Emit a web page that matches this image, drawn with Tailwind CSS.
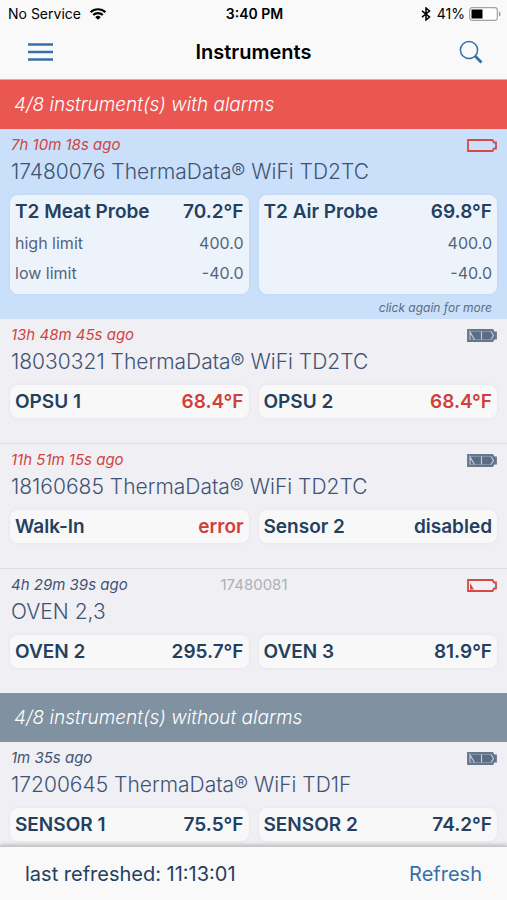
<!DOCTYPE html>
<html lang="en">
<head>
    <meta charset="UTF-8">
    <meta name="viewport" content="width=device-width, initial-scale=1.0">
    <title>Instruments</title>
    <script src="https://cdn.jsdelivr.net/npm/@tailwindcss/browser@4"></script>
</head>
<body class="h-screen flex flex-col bg-[#efeff4] text-[#24405f] font-['Inter','Liberation_Sans',sans-serif]">
    <!-- Battery icons -->
    <svg class="hidden">
        <symbol id="battery-empty" viewBox="0 0 30 13">
            <path d="M1 1h24.500l1.500 2.500h2v6H27L25.500 12H1z" fill="none" stroke="currentColor" stroke-width="1.800"/>
        </symbol>
        <symbol id="battery-low" viewBox="0 0 30 13">
            <path d="M1 1h24.500l1.500 2.500h2v6H27L25.500 12H1z" fill="none" stroke="currentColor" stroke-width="1.800"/>
            <path d="M3 4l4 6.500H3z" fill="currentColor"/>
        </symbol>
        <symbol id="battery-full" viewBox="0 0 30 13">
            <path d="M1 1h24.500l1.500 2.500h2v6H27L25.500 12H1z" fill="#5b6c84" stroke="#66768d" stroke-width="1.800"/>
            <path d="M2.500 2.500h22M2.500 10.500h22" stroke="#8a98aa" stroke-width=".8"/>
            <path d="M3 10.500V3l4.500 7.500M14.500 2.500v8M24 2.500l2.500 4-2.500 4" fill="none" stroke="#c3ccd7" stroke-width="1.200"/>
        </symbol>
    </svg>

    <header class="shrink-0 bg-[#f9f9f9] text-black border-b border-[#c9b5b8]">
        <!-- Status bar -->
        <div class="grid grid-cols-3 items-center h-7 pl-2 pr-1.5 text-sm">
            <div class="flex items-center gap-2">
                <span>No Service</span>
                <svg class="w-[18px] h-3" viewBox="0 0 18 13" fill="none" stroke="black" stroke-width="2.300">
                    <path d="M1 4.600a11.500 11.500 0 0 1 16 0"/>
                    <path d="M3.800 7.600a7.500 7.500 0 0 1 10.400 0"/>
                    <path d="M9 12.800L6 9.900a4.200 4.200 0 0 1 6 0z" fill="black" stroke="none"/>
                </svg>
            </div>
            <div class="text-center font-semibold">3:40 PM</div>
            <div class="flex items-center justify-end">
                <svg class="w-[10px] h-[14px] mr-1.5" viewBox="0 0 10 14" fill="none" stroke="black" stroke-width="1.500">
                    <path d="M1 3.800l7.500 6.200L5 13V1l3.500 3L1 10.200"/>
                </svg>
                <span class="mr-1">41%</span>
                <svg class="w-[32px] h-[14px]" viewBox="0 0 32 14">
                    <rect x=".7" y=".7" width="27.600" height="12.600" rx="2.500" fill="white" stroke="#a3a3a3" stroke-width="1.200"/>
                    <rect x="2.500" y="2.500" width="11" height="9" fill="black"/>
                    <path d="M29.800 4.500q2 .5 2 2.500t-2 2.500z" fill="#a3a3a3"/>
                </svg>
            </div>
        </div>
        <!-- Nav bar -->
        <nav class="grid grid-cols-[1fr_auto_1fr] items-center h-[51px] px-6 pb-1">
            <button type="button" aria-label="Menu" class="justify-self-start pl-1">
                <svg class="w-[25px] h-[18px]" viewBox="0 0 25 18" stroke="#386fa8" stroke-width="2.400">
                    <path d="M0 1.500h25M0 9h25M0 16.500h25"/>
                </svg>
            </button>
            <h1 class="text-xl font-semibold">Instruments</h1>
            <button type="button" aria-label="Search" class="justify-self-end">
                <svg class="w-6 h-6" viewBox="0 0 24 24" fill="none" stroke="#386fa8">
                    <circle cx="10" cy="10" r="8.600" stroke-width="1.500"/>
                    <path d="M16 16l6.500 6.500" stroke-width="2.800"/>
                </svg>
            </button>
        </nav>
    </header>

    <main class="flex-1 min-h-0 overflow-y-auto [scrollbar-width:none]">
        <h2 class="flex items-center h-[49px] px-3.5 pt-0.5 bg-[#ea5753] text-white text-[19px] italic font-light">4/8 instrument(s) with alarms</h2>
        <ul>
            <!-- Selected instrument -->
            <li class="px-2.5 bg-[#c9dffa]">
                <div class="flex items-center justify-between h-[33px] pl-px">
                    <time class="text-[15px] italic text-[#d0453f]">7h 10m 18s ago</time>
                    <svg class="w-[30px] h-[13px] text-[#d64a43]" role="img" aria-label="Battery empty"><use href="#battery-empty"/></svg>
                </div>
                <h3 class="h-[33px] pl-px text-[21px] leading-5 font-light text-[#3f5474]">17480076 ThermaData® WiFi TD2TC</h3>
                <div class="grid grid-cols-2 gap-2.5">
                    <div class="px-[5px] pb-1.5 rounded-lg bg-[#edf3fa] shadow-[0_0_4px_rgba(0,0,0,0.05)]">
                        <div class="flex items-center justify-between h-[33px] pt-0.5 text-[19px] font-semibold"><span>T2 Meat Probe</span><span>70.2°F</span></div>
                        <div class="flex items-center justify-between h-[30px] text-base text-[#53657e]"><span>high limit</span><span>400.0</span></div>
                        <div class="flex items-center justify-between h-[30px] text-base text-[#53657e]"><span>low limit</span><span>-40.0</span></div>
                    </div>
                    <div class="px-[5px] pb-1.5 rounded-lg bg-[#edf3fa] shadow-[0_0_4px_rgba(0,0,0,0.05)]">
                        <div class="flex items-center justify-between h-[33px] pt-0.5 text-[19px] font-semibold"><span>T2 Air Probe</span><span>69.8°F</span></div>
                        <div class="flex items-center justify-end h-[30px] text-base text-[#53657e]">400.0</div>
                        <div class="flex items-center justify-end h-[30px] text-base text-[#53657e]">-40.0</div>
                    </div>
                </div>
                <p class="h-[25px] pt-1.5 pr-[5px] text-right text-xs italic text-[#5d6b7e]">click again for more</p>
            </li>
            <li class="px-2.5 pb-[25px] border-b border-[#dcdce2]">
                <div class="flex items-center justify-between h-[33px] pl-px">
                    <time class="text-[15px] italic text-[#d0453f]">13h 48m 45s ago</time>
                    <svg class="w-[30px] h-[13px]" role="img" aria-label="Battery full"><use href="#battery-full"/></svg>
                </div>
                <h3 class="h-[33px] pl-px text-[21px] leading-5 font-light text-[#3f5474]">18030321 ThermaData® WiFi TD2TC</h3>
                <div class="grid grid-cols-2 gap-2.5 text-[19px] font-semibold">
                    <div class="flex items-center justify-between h-[33px] pt-0.5 px-[5px] rounded-lg bg-[#f8f8f9] shadow-[0_0_4px_rgba(0,0,0,0.05)]"><span>OPSU 1</span><span class="text-[#d0403a]">68.4°F</span></div>
                    <div class="flex items-center justify-between h-[33px] pt-0.5 px-[5px] rounded-lg bg-[#f8f8f9] shadow-[0_0_4px_rgba(0,0,0,0.05)]"><span>OPSU 2</span><span class="text-[#d0403a]">68.4°F</span></div>
                </div>
            </li>
            <li class="px-2.5 pb-[25px] border-b border-[#dcdce2]">
                <div class="flex items-center justify-between h-[33px] pl-px">
                    <time class="text-[15px] italic text-[#d0453f]">11h 51m 15s ago</time>
                    <svg class="w-[30px] h-[13px]" role="img" aria-label="Battery full"><use href="#battery-full"/></svg>
                </div>
                <h3 class="h-[33px] pl-px text-[21px] leading-5 font-light text-[#3f5474]">18160685 ThermaData® WiFi TD2TC</h3>
                <div class="grid grid-cols-2 gap-2.5 text-[19px] font-semibold">
                    <div class="flex items-center justify-between h-[33px] pt-0.5 px-[5px] rounded-lg bg-[#f8f8f9] shadow-[0_0_4px_rgba(0,0,0,0.05)]"><span>Walk-In</span><span class="text-[#d0403a]">error</span></div>
                    <div class="flex items-center justify-between h-[33px] pt-0.5 px-[5px] rounded-lg bg-[#f8f8f9] shadow-[0_0_4px_rgba(0,0,0,0.05)]"><span>Sensor 2</span><span>disabled</span></div>
                </div>
            </li>
            <li class="px-2.5 pb-[25px]">
                <div class="grid grid-cols-3 items-center h-[33px] pl-px text-[15px]">
                    <time class="italic text-[#3f5474]">4h 29m 39s ago</time>
                    <span class="text-center text-[#b0b0b4]">17480081</span>
                    <svg class="justify-self-end w-[30px] h-[13px] text-[#d64a43]" role="img" aria-label="Battery low"><use href="#battery-low"/></svg>
                </div>
                <h3 class="h-[33px] pl-px text-[21px] leading-5 font-light text-[#3f5474]">OVEN 2,3</h3>
                <div class="grid grid-cols-2 gap-2.5 text-[19px] font-semibold">
                    <div class="flex items-center justify-between h-[33px] pt-0.5 px-[5px] rounded-lg bg-[#f8f8f9] shadow-[0_0_4px_rgba(0,0,0,0.05)]"><span>OVEN 2</span><span>295.7°F</span></div>
                    <div class="flex items-center justify-between h-[33px] pt-0.5 px-[5px] rounded-lg bg-[#f8f8f9] shadow-[0_0_4px_rgba(0,0,0,0.05)]"><span>OVEN 3</span><span>81.9°F</span></div>
                </div>
            </li>
        </ul>

        <h2 class="flex items-center h-[49px] px-3.5 pt-0.5 bg-[#8091a2] text-white text-[19px] italic font-light">4/8 instrument(s) without alarms</h2>
        <ul>
            <li class="px-2.5 pb-[25px] border-b border-[#dcdce2]">
                <div class="flex items-center justify-between h-[33px] pl-px">
                    <time class="text-[15px] italic text-[#3f5474]">1m 35s ago</time>
                    <svg class="w-[30px] h-[13px]" role="img" aria-label="Battery full"><use href="#battery-full"/></svg>
                </div>
                <h3 class="h-[33px] pl-px text-[21px] leading-5 font-light text-[#3f5474]">17200645 ThermaData® WiFi TD1F</h3>
                <div class="grid grid-cols-2 gap-2.5 text-[19px] font-semibold">
                    <div class="flex items-center justify-between h-[33px] pt-0.5 px-[5px] rounded-lg bg-[#f8f8f9] shadow-[0_0_4px_rgba(0,0,0,0.05)]"><span>SENSOR 1</span><span>75.5°F</span></div>
                    <div class="flex items-center justify-between h-[33px] pt-0.5 px-[5px] rounded-lg bg-[#f8f8f9] shadow-[0_0_4px_rgba(0,0,0,0.05)]"><span>SENSOR 2</span><span>74.2°F</span></div>
                </div>
            </li>
        </ul>
    </main>

    <footer class="relative shrink-0 flex items-center justify-between h-[54px] px-[25px] bg-[#f9f9fa] border-t border-[#c8c8cc] shadow-[0_-1px_4px_rgba(0,0,0,0.25)] text-xl">
        <span>last refreshed: 11:13:01</span>
        <button type="button" class="text-[#386fa8]">Refresh</button>
    </footer>
</body>
</html>
